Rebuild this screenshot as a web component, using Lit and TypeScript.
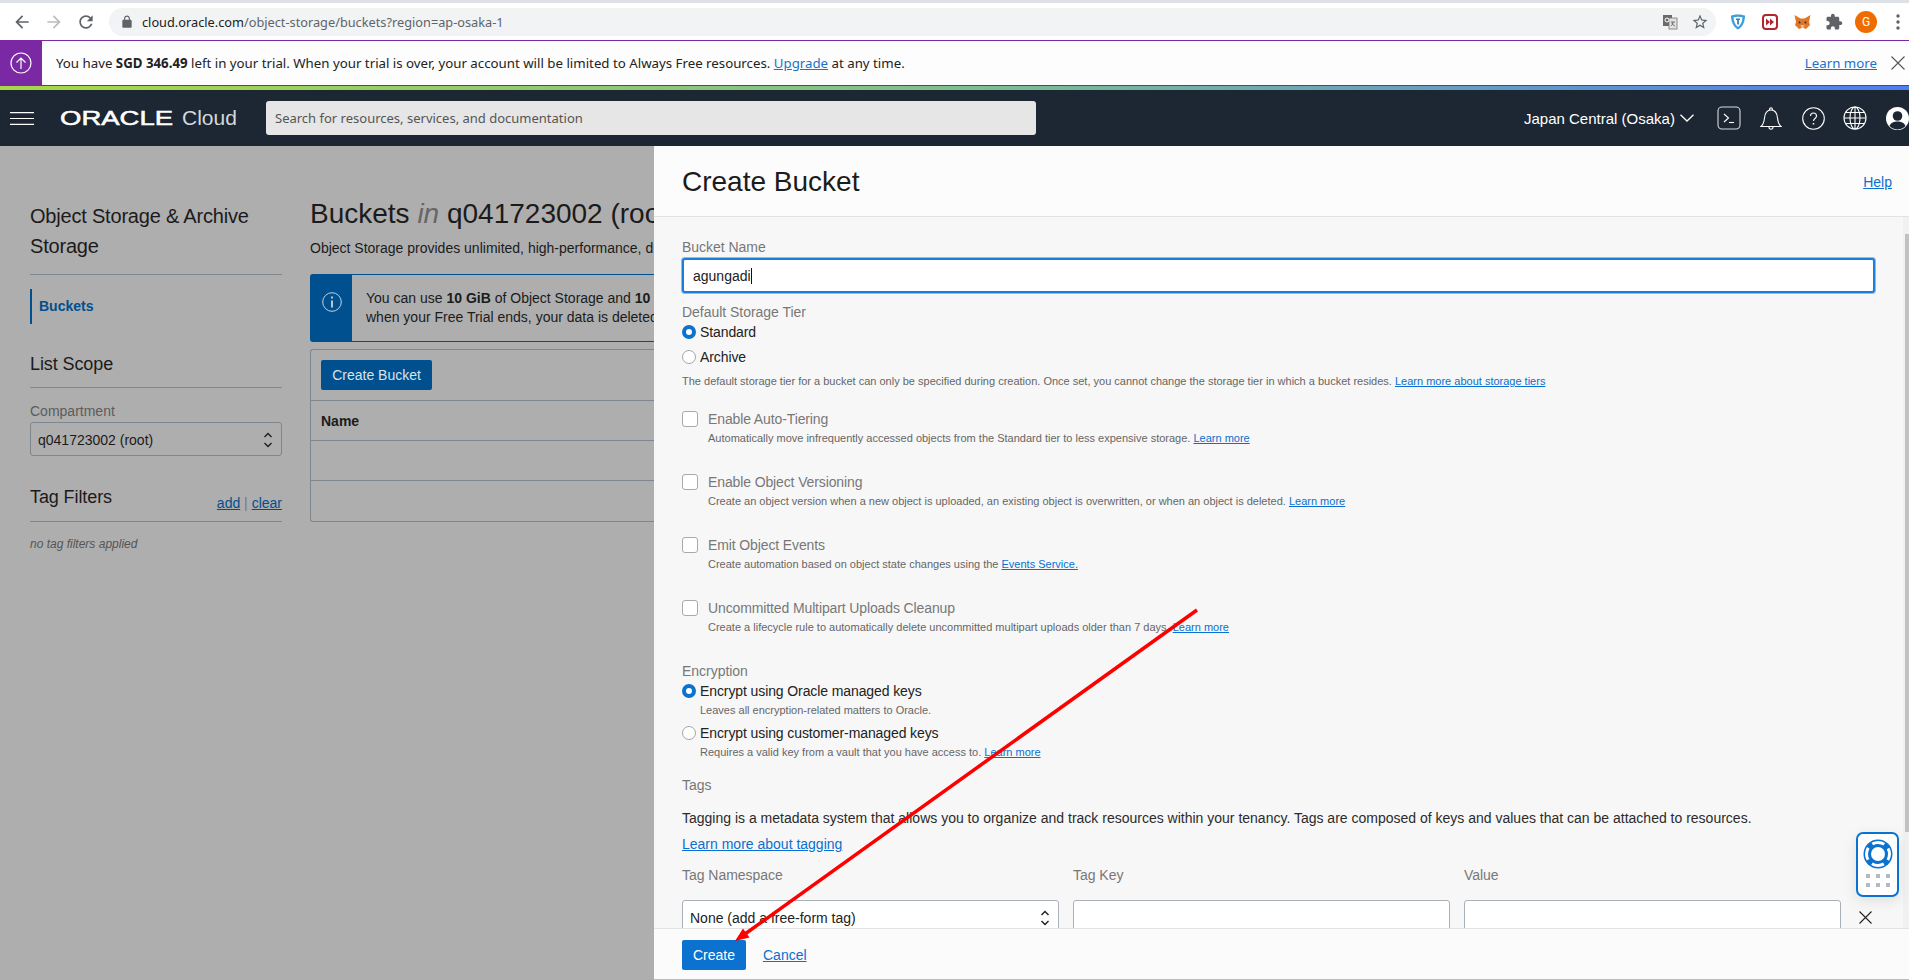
import { LitElement, html, css, svg } from "lit";
import { customElement } from "lit/decorators.js";

const chev = html`<svg class="updown" width="10" height="18" viewBox="0 0 10 18" fill="none" stroke="#1f1f1f" stroke-width="1.4"><path d="M1.5 6 5 2.5 8.500 6M1.500 12 5 15.500 8.500 12"/></svg>`;

const materialIcon = (d: string, fill: string, size = 20) =>
  html`<svg width="${size}" height="${size}" viewBox="0 0 24 24" fill="${fill}"><path d="${d}"/></svg>`;

@customElement("app-root")
export class AppRoot extends LitElement {
  static styles = css`
    :host { display: block; position: relative; width: 1909px; height: 980px; overflow: hidden; font-family: "Liberation Sans", Arial, sans-serif; font-size: 14px; color: #1b1b1b; background: #aeaeae; }
    a { color: #0b6fd1; text-decoration: underline; }
    .tabstrip { height: 3px; background: #dee1e6; }
    .toolbar { height: 37px; background: #fff; display: flex; align-items: center; }
    .slot { width: 32px; flex: none; display: flex; justify-content: center; align-items: center; }
    .slot.first { margin-left: 6px; }
    .omni { width: 1607px; margin-left: 7px; height: 28px; border-radius: 14px; background: #f1f3f4; display: flex; align-items: center; font-family: "Noto Sans", sans-serif; font-size: 12.750px; color: #5f6368; padding-left: 11px; box-sizing: border-box; flex: none; }
    .omni .lock { margin-right: 8px; display: flex; }
    .omni b { font-weight: 400; color: #202124; }
    .omni .tools { margin-left: auto; display: flex; align-items: center; gap: 13px; padding-right: 7px; }
    .ext { margin-left: 6px; display: flex; flex: none; }
    .avatar { width: 22px; height: 22px; border-radius: 50%; background: #ef6c00; color: #fff; font-size: 12px; display: flex; align-items: center; justify-content: center; font-family: "Roboto", sans-serif; }
    .banner { height: 44px; border-top: 1px solid #7b28a4; border-bottom: 1px solid #7b28a4; background: #fdfdfd; display: flex; align-items: center; font-family: "Noto Sans", sans-serif; font-size: 13.270px; color: #222; }
    .banner .ico { width: 42px; height: 100%; background: #7b28a4; display: flex; align-items: center; justify-content: center; flex: none; }
    .banner .msg { margin-left: 14px; }
    .banner .msg a { color: #1a73c9; }
    .banner .lm { margin-left: auto; color: #1a73c9; }
    .banner .x { width: 42px; display: flex; justify-content: center; margin-right: -10px; flex: none; }
    .stripe { height: 4px; background: linear-gradient(90deg, #a8d846 0%, #7fbf8f 50%, #4d7ff0 100%); }
    .nav { height: 56px; background: #1c2733; display: flex; align-items: center; color: #fff; }
    .burger { margin-left: 10px; width: 24px; flex: none; display: flex; }
    .brand { margin-left: 26px; width: 206px; flex: none; display: flex; align-items: baseline; }
    .oracle { display: inline-block; width: 122px; flex: none; font-size: 19.500px; font-weight: 400; -webkit-text-stroke: 0.5px #fff; transform: scaleX(1.41); transform-origin: left center; white-space: nowrap; }
    .cloud { font-size: 21px; color: #d5d8db; }
    .search { width: 770px; height: 34px; border-radius: 3px; background: #e6e6e6; color: #555; padding-left: 9px; box-sizing: border-box; display: flex; align-items: center; font-family: "Noto Sans", sans-serif; font-size: 13px; flex: none; }
    .region { margin-left: 488px; font-size: 15px; width: 156px; flex: none; white-space: nowrap; }
    .regchev { width: 28px; flex: none; display: flex; }
    .navico { width: 42px; flex: none; display: flex; justify-content: center; }
    .page { display: flex; height: 834px; }
    .side { width: 252px; margin-left: 30px; padding-top: 55px; flex: none; }
    .side h2 { margin: 0; font-weight: 400; font-size: 20px; line-height: 30px; letter-spacing: -0.2px; }
    .hr { border-bottom: 1px solid #7f868d; }
    .side .hr.t { margin-top: 13px; }
    .mark { margin-top: 14px; height: 35px; border-left: 2px solid #00508f; padding: 0 0 2px 7px; box-sizing: border-box; display: flex; align-items: center; font-weight: 700; color: #00508f; font-size: 14px; }
    .side h3 { margin: 0; font-weight: 400; font-size: 18px; line-height: 24px; letter-spacing: -0.1px; }
    .scope { margin-top: 28px; padding-bottom: 11px; }
    .lab { line-height: 20px; color: #5c5c5c; font-size: 14px; }
    .comp { margin-top: 13px; }
    .sel { margin-top: 1px; height: 34px; box-sizing: border-box; border: 1px solid #7f868d; border-radius: 3px; display: flex; align-items: center; justify-content: space-between; padding: 2px 8px 0 7px; font-size: 14px; }
    .tagrow { margin-top: 29px; height: 36px; display: flex; justify-content: space-between; box-sizing: content-box; }
    .tagrow .links { margin-top: 8px; line-height: 20px; color: #777; }
    .tagrow a { color: #00508f; }
    .none { margin-top: 14px; font-style: italic; font-size: 12px; line-height: 16px; color: #555; }
    .main { margin: 0 1255px 0 28px; flex: 1; min-width: 0; padding-top: 50px; white-space: nowrap; overflow: hidden; }
    .main h1 { margin: 0; font-weight: 400; font-size: 28px; line-height: 36px; }
    .main h1 i { color: #666; }
    .main p { margin: 6px 0 0; line-height: 20px; font-size: 14px; }
    .info { margin-top: 16px; height: 68px; box-sizing: border-box; border: 1px solid #00508f; border-radius: 3px 0 0 3px; border-right: 0; display: flex; }
    .info .bl { width: 41px; background: #00508f; display: flex; justify-content: center; padding-top: 17px; box-sizing: border-box; flex: none; }
    .info .tx { margin-left: 14px; padding-top: 14px; line-height: 19px; }
    .tbl { margin-top: 7px; border: 1px solid #7f868d; border-right: 0; border-radius: 3px 0 0 3px; }
    .tbl .bar { padding: 10px 0 0 10px; box-sizing: border-box; border-bottom: 1px solid #7f868d; height: 51px; }
    .btn2 { display: inline-flex; align-items: center; justify-content: center; width: 111px; height: 30px; border-radius: 2px; background: #00508f; color: #d9e2ea; }
    .tbl .row { height: 40px; box-sizing: border-box; border-bottom: 1px solid #7f868d; display: flex; align-items: center; padding-left: 10px; font-weight: 700; }
    .tbl .row.end { border-bottom: 0; }
    .panel { position: absolute; left: 654px; top: 146px; right: 0; height: 833px; display: flex; flex-direction: column; background: #f7f7f7; border-bottom: 1px solid #bbb; }
    .phead { height: 71px; flex: none; box-sizing: border-box; background: #fcfcfc; border-bottom: 1px solid #e3e3e3; display: flex; align-items: center; justify-content: space-between; padding: 2px 17px 0 28px; }
    .phead h2 { margin: 0; font-weight: 400; font-size: 28px; }
    .pmid { flex: 1; min-height: 0; display: flex; overflow: hidden; }
    .pbody { flex: 1; min-width: 0; padding: 20px 28px 0; box-sizing: border-box; }
    .scroll { width: 6px; flex: none; background: #f1f1f1; padding-top: 17px; box-sizing: border-box; }
    .scroll div { margin-left: 2px; height: 598px; background: #c1c1c1; }
    .field { line-height: 20px; color: #777; letter-spacing: -0.03px; }
    .input { margin-top: 1px; height: 35px; width: 1193px; box-sizing: border-box; border: 2px solid #1a7fdc; box-shadow: 0 0 0 1px #8cbdec; border-radius: 3px; background: #fff; display: flex; align-items: center; padding-left: 9px; color: #222; }
    .caret { display: inline-block; width: 1px; height: 16px; background: #111; }
    .opt { display: flex; align-items: center; height: 20px; color: #222; letter-spacing: -0.1px; }
    .radio { width: 14px; height: 14px; box-sizing: border-box; border: 1px solid #a5a5a5; border-radius: 50%; background: #fff; margin-right: 4px; flex: none; }
    .radio.on { border: 4.500px solid #0b72cf; }
    .small { font-size: 11px; line-height: 16px; color: #666; }
    .small a { color: #0b6fd1; }
    .chk { margin-top: 26px; }
    .chk.first { margin-top: 20px; }
    .chkrow { display: flex; align-items: center; height: 20px; color: #777; letter-spacing: -0.12px; }
    .box { width: 16px; height: 16px; box-sizing: border-box; border: 1px solid #a9a9a9; border-radius: 3px; background: #fff; margin-right: 10px; flex: none; }
    .chk .small { margin: 1px 0 0 26px; }
    .ind { margin-left: 18px; }
    .body14 { margin-top: 13px; line-height: 20px; color: #2b2b2b; }
    .tags { margin-top: 15px; display: flex; gap: 14px; align-items: flex-start; }
    .tagcol { width: 377px; flex: none; }
    .tagctl { margin-top: 15px; height: 40px; box-sizing: border-box; border: 1px solid #a9b0b7; border-radius: 3px; background: #fff; display: flex; align-items: center; justify-content: space-between; padding: 0 8px 4px 7px; color: #222; white-space: nowrap; }
    .tagx { width: 26px; margin-top: 46px; flex: none; display: flex; justify-content: center; margin-left: -3px; }
    .pfoot { height: 51px; flex: none; box-sizing: border-box; background: #fbfbfb; border-top: 1px solid #e3e3e3; display: flex; align-items: center; padding: 2px 0 0 28px; }
    .create { width: 64px; height: 30px; border-radius: 2px; background: #0b72cf; color: #fff; display: flex; align-items: center; justify-content: center; }
    .cancel { margin-left: 17px; }
    .widget { position: absolute; left: 1856px; top: 832px; width: 43px; height: 65px; box-sizing: border-box; border: 2px solid #0b72cf; border-radius: 7px; background: #fff; box-shadow: 0 4px 14px rgba(0,0,0,.1); display: flex; flex-direction: column; align-items: center; padding-top: 5px; }
    .dots { margin-top: 5px; display: grid; grid-template-columns: repeat(3, 4px); gap: 5px 6px; }
    .dots i { height: 4px; background: #b3bac4; }
    .arrow { position: absolute; left: 0; top: 0; pointer-events: none; }
  `;

  private check(title: string, desc: unknown, first = false) {
    return html`<div class="chk ${first ? "first" : ""}">
      <div class="chkrow"><span class="box"></span>${title}</div>
      <div class="small">${desc}</div>
    </div>`;
  }

  render() {
    return html`
      <div class="tabstrip"></div>
      <div class="toolbar">
        <div class="slot first">${materialIcon("M20 11H7.830l5.590-5.590L12 4l-8 8 8 8 1.410-1.410L7.830 13H20v-2z", "#5f6368")}</div>
        <div class="slot">${materialIcon("M12 4l-1.410 1.410L16.170 11H4v2h12.170l-5.580 5.590L12 20l8-8z", "#babcbe")}</div>
        <div class="slot">${materialIcon("M17.650 6.350C16.200 4.900 14.210 4 12 4c-4.420 0-7.990 3.580-7.990 8s3.570 8 7.990 8c3.730 0 6.840-2.550 7.730-6h-2.080c-.82 2.330-3.040 4-5.650 4-3.310 0-6-2.690-6-6s2.690-6 6-6c1.660 0 3.140.69 4.220 1.780L13 11h7V4l-2.350 2.350z", "#5f6368")}</div>
        <div class="omni">
          <span class="lock">${materialIcon("M18 8h-1V6c0-2.760-2.240-5-5-5S7 3.240 7 6v2H6c-1.100 0-2 .9-2 2v10c0 1.100.9 2 2 2h12c1.100 0 2-.9 2-2V10c0-1.100-.9-2-2-2zM9 6c0-1.660 1.340-3 3-3s3 1.340 3 3v2H9V6z", "#5f6368", 14)}</span>
          <span><b>cloud.oracle.com</b>/object-storage/buckets?region=ap-osaka-1</span>
          <span class="tools">
            <svg width="16" height="16" viewBox="0 0 16 16"><rect x="1" y="1" width="9" height="11" fill="#6b6b6b"/><rect x="7" y="4" width="8" height="11" fill="#e2e2e2" stroke="#777" stroke-width=".8"/><circle cx="5" cy="6" r="2" fill="none" stroke="#fff"/><path d="M9 8h4M11 8c0 2-1 3-2 4M10 9c.5 1.500 1.500 2.500 3 3" stroke="#555" stroke-width=".8" fill="none"/></svg>
            ${materialIcon("M22 9.240l-7.190-.62L12 2 9.190 8.630 2 9.240l5.460 4.730L5.820 21 12 17.270 18.180 21l-1.630-7.030L22 9.240zM12 15.400l-3.760 2.270 1-4.280-3.320-2.880 4.380-.38L12 6.100l1.710 4.040 4.380.38-3.320 2.880 1 4.280L12 15.400z", "#5f6368", 18)}
          </span>
        </div>
        <div class="slot ext">
          <svg width="16" height="17" viewBox="0 0 16 17"><path d="M1 2.500C5 1 11 1 15 2.500 15 9 12.500 14 8 16.500 3.500 14 1 9 1 2.500z" fill="#3aa0dc"/><path d="M3.500 4.300c3-.7 6-.7 9 0-.2 4.500-1.800 7.700-4.500 9.700-2.700-2-4.300-5.200-4.500-9.700z" fill="#fff"/><path d="M6 5.500h4v1.500H8.900v4.500H7.100V7H6z" fill="#3a7fb0"/></svg>
        </div>
        <div class="slot">
          <svg width="16" height="16" viewBox="0 0 16 16"><rect x="1" y="1" width="14" height="14" rx="3" fill="#fff" stroke="#b3262b" stroke-width="2"/><path d="M4 4.500 8 8l-4 3.500zM8 4.500 12 8l-4 3.500z" fill="#b3262b"/></svg>
        </div>
        <div class="slot">
          <svg width="17" height="16" viewBox="0 0 17 16"><path d="M.5 1 6.500 4.500h4L16.500 1l-1.500 7 1 3-4 4-2.500-1h-2L5 15l-4-4 1-3z" fill="#e27625"/><path d="M5 7l2 2-2.500.5zM12 7l-2 2 2.500.5z" fill="#233447"/><path d="M6.500 11h4L9.500 14h-2z" fill="#d7c1b3"/></svg>
        </div>
        <div class="slot">${materialIcon("M20.500 11H19V7c0-1.100-.9-2-2-2h-4V3.500C13 2.120 11.880 1 10.500 1S8 2.120 8 3.500V5H4c-1.100 0-1.990.9-1.990 2v3.800H3.500c1.490 0 2.700 1.210 2.700 2.700s-1.210 2.700-2.700 2.700H2V20c0 1.100.9 2 2 2h3.800v-1.500c0-1.490 1.210-2.700 2.700-2.700 1.490 0 2.700 1.210 2.700 2.700V22H17c1.100 0 2-.9 2-2v-4h1.500c1.380 0 2.500-1.120 2.500-2.500S21.880 11 20.500 11z", "#5f6368", 18)}</div>
        <div class="slot"><span class="avatar">G</span></div>
        <div class="slot"><svg width="4" height="16" viewBox="0 0 4 16" fill="#5f6368"><circle cx="2" cy="2" r="1.700"/><circle cx="2" cy="8" r="1.700"/><circle cx="2" cy="14" r="1.700"/></svg></div>
      </div>

      <div class="banner">
        <div class="ico"><svg width="24" height="24" viewBox="0 0 24 24" fill="none" stroke="#fff" stroke-width="1.200"><circle cx="12" cy="12" r="10"/><path d="M12 18V7M7.500 11.500 12 7l4.500 4.500"/></svg></div>
        <div class="msg">You have <strong>SGD 346.49</strong> left in your trial. When your trial is over, your account will be limited to Always Free resources. <a>Upgrade</a> at any time.</div>
        <a class="lm">Learn more</a>
        <div class="x"><svg width="14" height="14" viewBox="0 0 14 14" stroke="#555" stroke-width="1.100"><path d="M.5.5l13 13M13.500.5l-13 13"/></svg></div>
      </div>
      <div class="stripe"></div>

      <div class="nav">
        <div class="burger"><svg width="24" height="13" viewBox="0 0 24 13" stroke="#fff" stroke-width="1.200"><path d="M0 .6h24M0 6.500h24M0 12.400h24"/></svg></div>
        <div class="brand"><span class="oracle">ORACLE</span><span class="cloud">Cloud</span></div>
        <div class="search">Search for resources, services, and documentation</div>
        <div class="region">Japan Central (Osaka)</div>
        <div class="regchev"><svg width="14" height="8" viewBox="0 0 14 8" fill="none" stroke="#fff" stroke-width="1.300"><path d="M.5.8 7 7 13.500.8"/></svg></div>
        <div class="navico"><svg width="24" height="24" viewBox="0 0 24 24" fill="none" stroke="#d8dadc" stroke-width="1.100"><rect x="1" y="1" width="22" height="22" rx="4"/><path d="M7 8l4.500 4L7 16" stroke="#fff"/><path d="M12 16.500h5" stroke="#fff"/></svg></div>
        <div class="navico"><svg width="22" height="24" viewBox="0 0 22 24" fill="none" stroke="#fff" stroke-width="1.100"><path d="M1 20.500h20c-2.500-2-3-4-3.500-8.500C17 6.500 14.500 4 11 4S5 6.500 4.500 12C4 16.500 3.500 18.500 1 20.500z"/><path d="M9.500 4c0-3 3-3 3 0M9 21c0 3 4 3 4 0"/></svg></div>
        <div class="navico"><svg width="23" height="23" viewBox="0 0 23 23" fill="none" stroke="#fff" stroke-width="1.100"><circle cx="11.500" cy="11.500" r="10.800"/><path d="M8.500 9c0-4 6-4 6 0 0 2.500-3 2.500-3 5"/><path d="M11.500 16v1.500" stroke-width="1.500"/></svg></div>
        <div class="navico"><svg width="24" height="24" viewBox="0 0 24 24" fill="none" stroke="#fff" stroke-width="1.100"><circle cx="12" cy="12" r="11"/><ellipse cx="12" cy="12" rx="5" ry="11"/><path d="M12 1v22M1 12h22M2.500 6.500h19M2.500 17.500h19"/></svg></div>
        <div class="navico"><svg width="23" height="23" viewBox="0 0 23 23"><circle cx="11.500" cy="11.500" r="11.500" fill="#fff"/><circle cx="11.500" cy="9" r="4.800" fill="#1c2733"/><path d="M3.500 19c1.500-3.500 4.500-4.500 8-4.500s6.500 1 8 4.500c-2 2.300-5 3.500-8 3.500s-6-1.200-8-3.500z" fill="#1c2733"/></svg></div>
      </div>

      <div class="page">
        <div class="side">
          <h2>Object Storage &amp; Archive Storage</h2>
          <div class="hr t"></div>
          <div class="mark">Buckets</div>
          <div class="scope hr"><h3>List Scope</h3></div>
          <div class="comp lab">Compartment</div>
          <div class="sel"><span>q041723002 (root)</span>${chev}</div>
          <div class="tagrow hr"><h3>Tag Filters</h3><div class="links"><a>add</a> | <a>clear</a></div></div>
          <div class="none">no tag filters applied</div>
        </div>
        <div class="main">
          <h1>Buckets <i>in</i> q041723002 (root)</h1>
          <p>Object Storage provides unlimited, high-performance, durable</p>
          <div class="info">
            <div class="bl"><svg width="20" height="20" viewBox="0 0 20 20" fill="none" stroke="#c9d3dc" stroke-width="1"><circle cx="10" cy="10" r="9.300"/><path d="M10 8.500v7" stroke-width="1.800"/><path d="M10 4.500v2" stroke-width="1.800"/></svg></div>
            <div class="tx">You can use <strong>10 GiB</strong> of Object Storage and <strong>10</strong><br />when your Free Trial ends, your data is deleted</div>
          </div>
          <div class="tbl">
            <div class="bar"><span class="btn2">Create Bucket</span></div>
            <div class="row">Name</div>
            <div class="row"></div>
            <div class="row end"></div>
          </div>
        </div>
      </div>

      <div class="panel">
        <div class="phead"><h2>Create Bucket</h2><a>Help</a></div>
        <div class="pmid">
          <div class="pbody">
            <div class="field">Bucket Name</div>
            <div class="input">agungadi<span class="caret"></span></div>
            <div class="field" style="margin-top:9px">Default Storage Tier</div>
            <div class="opt"><span class="radio on"></span>Standard</div>
            <div class="opt" style="margin-top:5px"><span class="radio"></span>Archive</div>
            <div class="small" style="margin-top:6px">The default storage tier for a bucket can only be specified during creation. Once set, you cannot change the storage tier in which a bucket resides. <a>Learn more about storage tiers</a></div>
            ${this.check("Enable Auto-Tiering", html`Automatically move infrequently accessed objects from the Standard tier to less expensive storage. <a>Learn more</a>`, true)}
            ${this.check("Enable Object Versioning", html`Create an object version when a new object is uploaded, an existing object is overwritten, or when an object is deleted. <a>Learn more</a>`)}
            ${this.check("Emit Object Events", html`Create automation based on object state changes using the <a>Events Service.</a>`)}
            ${this.check("Uncommitted Multipart Uploads Cleanup", html`Create a lifecycle rule to automatically delete uncommitted multipart uploads older than 7 days. <a>Learn more</a>`)}
            <div class="field" style="margin-top:26px">Encryption</div>
            <div class="opt"><span class="radio on"></span>Encrypt using Oracle managed keys</div>
            <div class="small ind" style="margin-top:1px">Leaves all encryption-related matters to Oracle.</div>
            <div class="opt" style="margin-top:5px"><span class="radio"></span>Encrypt using customer-managed keys</div>
            <div class="small ind" style="margin-top:1px">Requires a valid key from a vault that you have access to. <a>Learn more</a></div>
            <div class="field" style="margin-top:15px">Tags</div>
            <div class="body14">Tagging is a metadata system that allows you to organize and track resources within your tenancy. Tags are composed of keys and values that can be attached to resources.</div>
            <div style="margin-top:6px;line-height:20px"><a>Learn more about tagging</a></div>
            <div class="tags" style="margin-top:11px">
              <div class="tagcol"><div class="field">Tag Namespace</div><div class="tagctl"><span>None (add a free-form tag)</span>${chev}</div></div>
              <div class="tagcol"><div class="field">Tag Key</div><div class="tagctl"></div></div>
              <div class="tagcol"><div class="field">Value</div><div class="tagctl"></div></div>
              <div class="tagx"><svg width="13" height="13" viewBox="0 0 13 13" stroke="#222" stroke-width="1.100"><path d="M.5.5l12 12M12.500.5l-12 12"/></svg></div>
            </div>
          </div>
          <div class="scroll"><div></div></div>
        </div>
        <div class="pfoot"><div class="create">Create</div><a class="cancel">Cancel</a></div>
      </div>

      <div class="widget">
        <svg width="30" height="30" viewBox="0 0 30 30"><circle cx="15" cy="15" r="14.500" fill="#0b72cf"/><circle cx="15" cy="15" r="11.500" fill="none" stroke="#fff" stroke-width="3" stroke-dasharray="12.500 5.565" stroke-dashoffset="6.250"/><circle cx="15" cy="15" r="7" fill="#fff"/></svg>
        <div class="dots"><i></i><i></i><i></i><i></i><i></i><i></i></div>
      </div>

      <svg class="arrow" width="1909" height="980" viewBox="0 0 1909 980">
        ${svg`<path d="M1197 610 745 934" stroke="#f00" stroke-width="3.500" fill="none"/><path d="M735 941 749.500 937.500 743 928.500z" fill="#f00"/>`}
      </svg>
    `;
  }
}
